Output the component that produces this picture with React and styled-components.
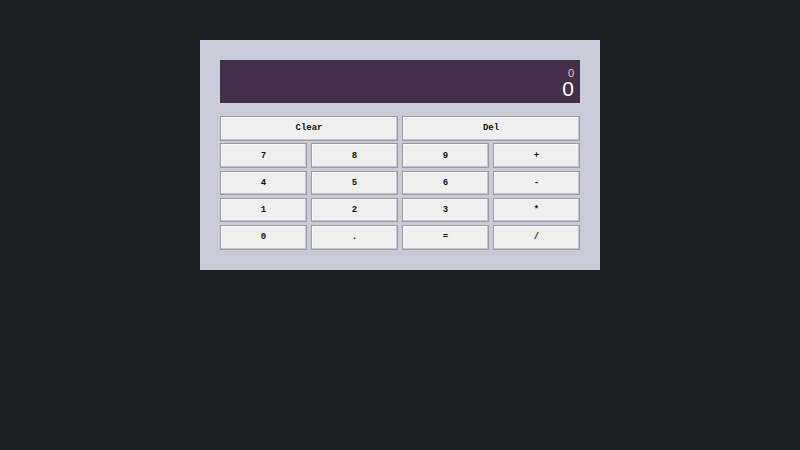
import React, { useState } from 'react'
import styled, { createGlobalStyle } from 'styled-components'

const GlobalStyle = createGlobalStyle`
  body {
    margin: 0;
    background: #1e1f22;
    font-family: "Liberation Sans", Arial, sans-serif;
  }
`

const Page = styled.div`
  padding-top: 40px;
  display: flex;
  justify-content: center;
`

const Calculator = styled.div`
  width: 360px;
  padding: 20px;
  background: #cbcbd7;
`

const Display = styled.div`
  height: 43px;
  background: #432f47;
  color: #fff;
  display: flex;
  flex-direction: column;
  align-items: flex-end;
  justify-content: flex-start;
  padding: 9px 6px 0;
  box-sizing: border-box;
  margin-bottom: 13px;
`

const Previous = styled.div`
  font-size: 11px;
  line-height: 9px;
  color: #d8d0da;
`

const Current = styled.div`
  font-size: 21px;
  line-height: 22px;
`

const Keys = styled.div`
  display: grid;
  grid-template-columns: repeat(4, 1fr);
  grid-auto-rows: 24.5px;
  column-gap: 4px;
  row-gap: 2.75px;
`

const Key = styled.button`
  grid-column: ${p => (p.$wide ? 'span 2' : 'auto')};
  background: #efefef;
  border: 1px solid #9a9aa4;
  box-shadow: inset -1px -1px 0 #c4c4cc, inset 1px 1px 0 #fafafa;
  font-family: "Liberation Mono", "Courier New", monospace;
  font-weight: bold;
  font-size: 9px;
  color: #111;
  padding: 0;
  cursor: pointer;
`

const rows = [
  ['7', '8', '9', '+'],
  ['4', '5', '6', '-'],
  ['1', '2', '3', '*'],
  ['0', '.', '=', '/'],
]

export default function App() {
  const [prev] = useState('0')
  const [cur] = useState('0')

  return (
    <>
      <GlobalStyle />
      <Page>
        <Calculator>
          <Display>
            <Previous>{prev}</Previous>
            <Current>{cur}</Current>
          </Display>
          <Keys>
            <Key $wide>Clear</Key>
            <Key $wide>Del</Key>
            {rows.flat().map(k => (
              <Key key={k}>{k}</Key>
            ))}
          </Keys>
        </Calculator>
      </Page>
    </>
  )
}
